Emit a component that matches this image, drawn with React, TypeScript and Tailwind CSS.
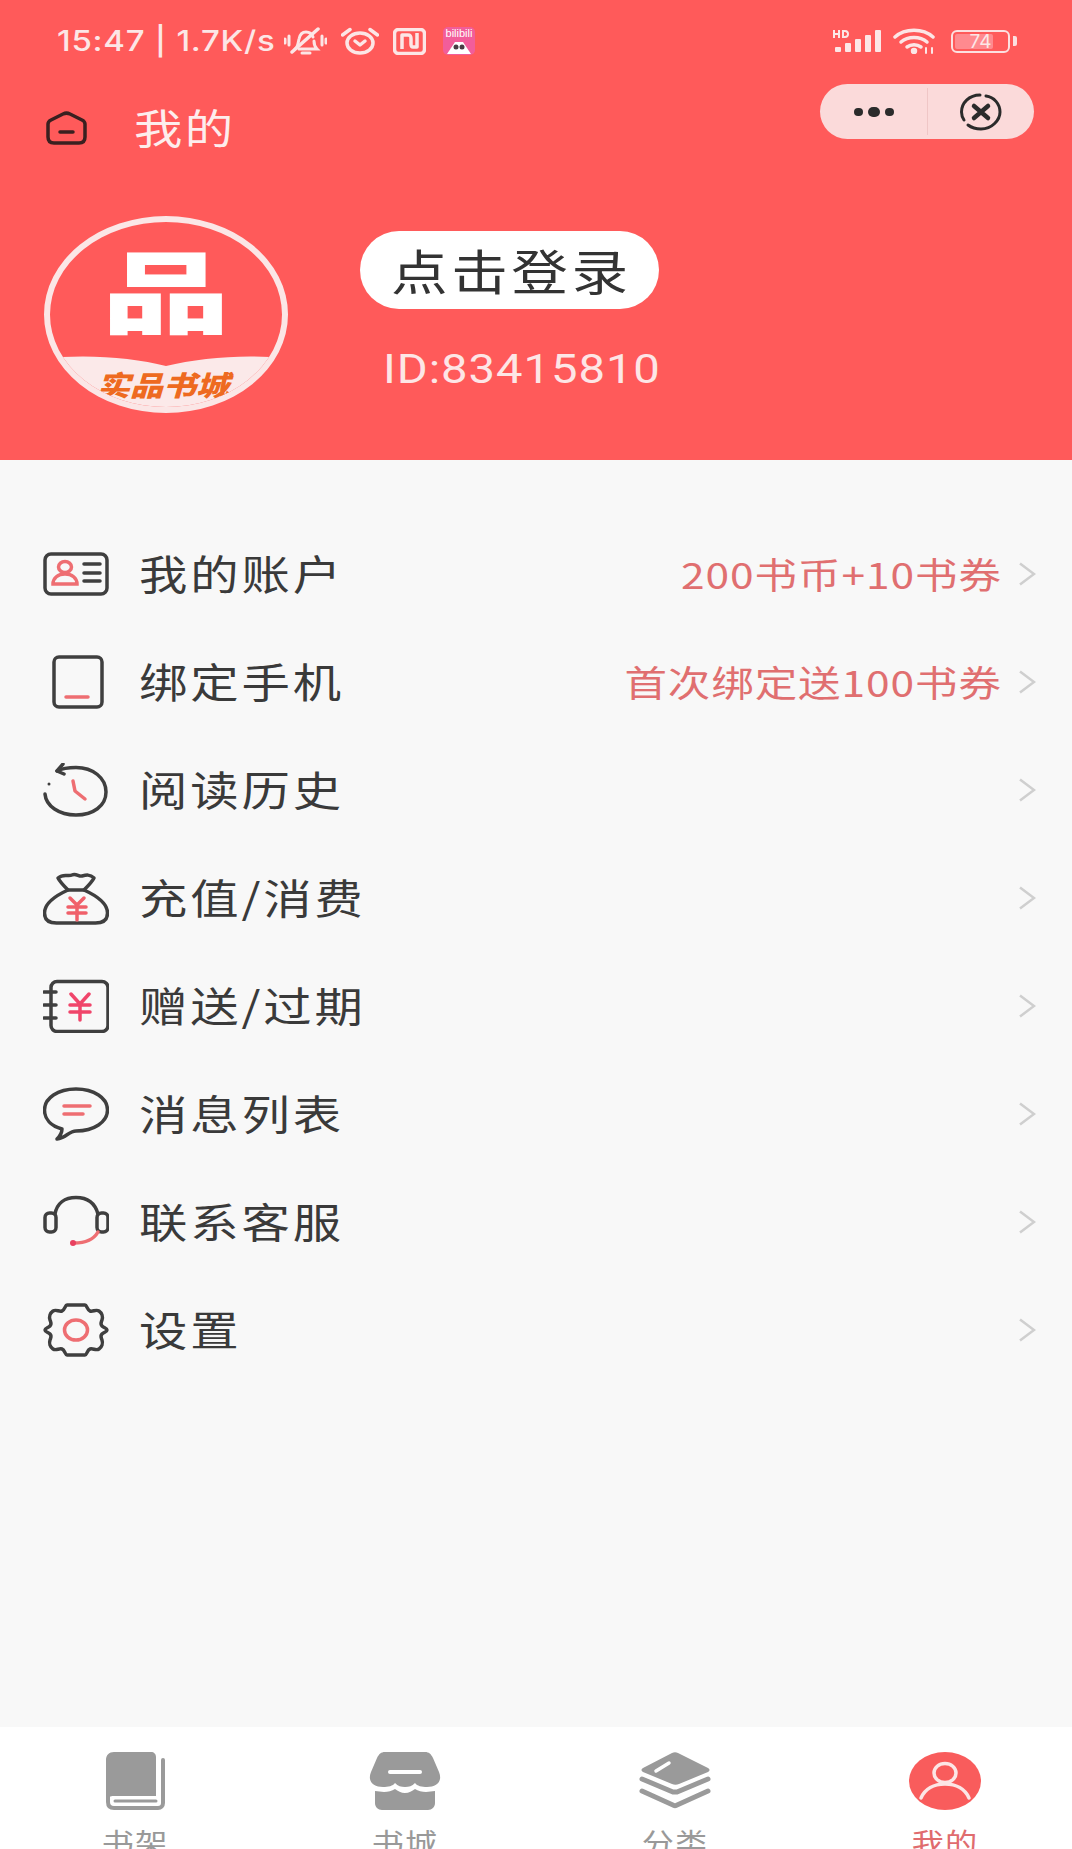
import type { ReactNode } from 'react';

const FONT = "font-['Noto_Sans_CJK_SC','Noto_Sans',sans-serif]";
const INK = '#3f3f3f';
const RED = '#EE6E72';

// ---- list icons, all drawn in a 66x54 box ----
const IconCard = () => (
  <svg width="66" height="54" viewBox="0 0 66 54" fill="none" strokeWidth="3.500" strokeLinecap="round">
    <rect x="2" y="7" width="62" height="40" rx="6" stroke={INK} />
    <ellipse cx="22" cy="20" rx="6.500" ry="5.500" stroke={RED} />
    <path d="M10 37c0-6 5-10 12-10s12 4 12 10z" stroke={RED} />
    <path d="M41 17h16M41 26h16M41 34h16" stroke={INK} />
  </svg>
);

const IconPhone = () => (
  <svg width="66" height="54" viewBox="0 0 66 54" fill="none" strokeWidth="3.500" strokeLinecap="round">
    <rect x="11" y="2" width="48" height="50" rx="5" stroke={INK} />
    <path d="M23 42h22" stroke={RED} />
  </svg>
);

const IconHistory = () => (
  <svg width="66" height="54" viewBox="0 0 66 54" fill="none" strokeWidth="3.500" strokeLinecap="round" strokeLinejoin="round">
    <path d="M14 8C19 5.500 25 4.500 33 4.500 50 4.500 63 15 63 29S50 52 33 52C16 52 3 43 2 31" stroke={INK} />
    <path d="M20 1l-6 7 7 3" stroke={INK} />
    <circle cx="6" cy="21" r="1.500" fill={INK} />
    <path d="M30 18l2 10 10 8" stroke={RED} />
  </svg>
);

const IconBag = () => (
  <svg width="66" height="54" viewBox="0 0 66 54" fill="none" strokeWidth="3.500" strokeLinecap="round" strokeLinejoin="round">
    <path d="M25 19C14 24 1.500 32 1.500 42c0 7 5 10 12 10h39c7 0 12-3 12-10 0-10-12.500-18-23.500-23" stroke={INK} />
    <path d="M25 19h16c4-4 8-8 10-12-4-4-8-3-12-2-3 1-6-3-10-1-4 2-8-2-14 3 2 4 6 8 10 12z" stroke={INK} />
    <path d="M27 27l7 7 7-7M25 36h18M25 42h18M34 34v15" stroke="#F0606A" />
  </svg>
);

const IconVoucher = () => (
  <svg width="66" height="54" viewBox="0 0 66 54" fill="none" strokeWidth="3.500" strokeLinecap="round" strokeLinejoin="round">
    <rect x="8" y="2.500" width="57" height="50" rx="6" stroke={INK} />
    <path d="M1 13h12M1 26h12M1 39h12" stroke={INK} />
    <path d="M28 15l9 10 9-10M27 26h20M27 33h20M37 25v16" stroke="#F0456A" />
  </svg>
);

const IconMessage = () => (
  <svg width="66" height="54" viewBox="0 0 66 54" fill="none" strokeWidth="3.500" strokeLinecap="round" strokeLinejoin="round">
    <path d="M19 42C8 39 1.500 32 1.500 23 1.500 11 15 2 33 2s31.500 9 31.500 21S51 44 33 44c-7 0-10 7-19 8 3-3 5-6 5-10z" stroke={INK} />
    <path d="M21 19h26M21 27h19" stroke={RED} />
  </svg>
);

const IconHeadset = () => (
  <svg width="66" height="54" viewBox="0 0 66 54" fill="none" strokeWidth="3.500" strokeLinecap="round">
    <path d="M12 19C14 8 22 2.500 33 2.500S52 8 55 19" stroke={INK} />
    <rect x="2" y="18" width="11" height="19" rx="4.500" stroke={INK} />
    <rect x="54" y="18" width="11" height="19" rx="4.500" stroke={INK} />
    <path d="M55 37C51 44 42 48 31 48" stroke={RED} />
    <circle cx="30" cy="48" r="3" fill="#E8405F" />
  </svg>
);

const IconGear = () => (
  <svg width="66" height="54" viewBox="0 0 66 54" fill="none" strokeWidth="3.500" strokeLinecap="round" strokeLinejoin="round">
    <path
      d="M24 2h18c2 0 2 5 5 6 3 1 6-2 9 0 3 2 4 6 3 9-1 3-2 4 0 6 2 2 5 2 5 4s-3 2-5 4c-2 2-1 3 0 6 1 3 0 7-3 9-3 2-6-1-9 0-3 1-3 6-5 6H24c-2 0-2-5-5-6-3-1-6 2-9 0-3-2-4-6-3-9 1-3 2-4 0-6-2-2-5-2-5-4s3-2 5-4c2-2 1-3 0-6-1-3 0-7 3-9 3-2 6 1 9 0 3-1 3-6 5-6z"
      stroke={INK}
    />
    <ellipse cx="33" cy="27" rx="11.500" ry="10" stroke={RED} />
  </svg>
);

// ---- status bar glyphs ----
const W = '#FCE6E6';

const MutedBell = () => (
  <svg width="43" height="28" viewBox="0 0 43 28" fill="none" stroke={W} strokeWidth="3" strokeLinecap="round">
    <path d="M1 12v4M5 9v9M38 9v9M42 12v4" />
    <path d="M11 22c3-2 3-6 4-10 1-5 4-7 7-7 4 0 6 2 7 5M30 14c0 3 1 6 3 8H15" />
    <path d="M18 26h8" />
    <path d="M8 25L34 2" strokeWidth="3.500" />
  </svg>
);

const Alarm = () => (
  <svg width="38" height="28" viewBox="0 0 38 28" fill="none" stroke={W} strokeWidth="3.500" strokeLinecap="round" strokeLinejoin="round">
    <ellipse cx="19" cy="16" rx="13" ry="10" />
    <path d="M1.500 8L9 2.500M36.500 8L29 2.500" />
    <path d="M14 14l5 4 5-4" />
  </svg>
);

const Nfc = () => (
  <svg width="33" height="27" viewBox="0 0 33 27" fill="none" stroke={W} strokeWidth="3.500" strokeLinejoin="round">
    <rect x="1.500" y="1.500" width="30" height="24" rx="4" />
    <path d="M9 21V7h6c3 0 3 2 3 4v5c0 2 0 3 2 3h4V5" />
  </svg>
);

const Bilibili = () => (
  <div className="w-[32px] h-[28px] rounded-[5px] bg-[#F25D9A] flex flex-col items-center overflow-hidden">
    <span className="text-[11px] leading-[13px] text-white font-['Liberation_Sans',sans-serif]">bilibili</span>
    <svg width="24" height="14" viewBox="0 0 24 14" fill="white">
      <path d="M0 14L8 2h8l8 12z" />
      <circle cx="9" cy="7" r="2.500" fill="#4a3b44" />
      <circle cx="15" cy="7" r="2.500" fill="#4a3b44" />
    </svg>
  </div>
);

const Signal = () => (
  <svg width="48" height="24" viewBox="0 0 48 24" fill={W}>
    <path d="M0 1h2v3h3V1h2v8H5V6H2v3H0zM9 1h3c3 0 4 2 4 4s-1 4-4 4H9zm2 2v4h1c1 0 2-1 2-2s-1-2-2-2z" />
    <rect x="2" y="18" width="6" height="5" rx="1" />
    <rect x="12" y="14" width="6" height="9" rx="1" />
    <rect x="22" y="10" width="6" height="13" rx="1" />
    <rect x="32" y="6" width="6" height="17" rx="1" />
    <rect x="42" y="1" width="6" height="22" rx="1" />
  </svg>
);

const Wifi = () => (
  <svg width="44" height="26" viewBox="0 0 44 26" fill="none" stroke={W} strokeWidth="3.500" strokeLinecap="round">
    <path d="M2 9C12 0 30 0 40 9" />
    <path d="M8 14C15 8 27 8 34 14" />
    <path d="M14 19c4-3 10-3 14 0" />
    <circle cx="21" cy="23" r="1.500" fill={W} />
    <path d="M33 20v5M39 20v5" strokeWidth="2" />
  </svg>
);

const Battery = () => (
  <div className="flex items-center gap-[3px]">
    <div className="w-[59px] h-[23px] rounded-[6px] border-[2.5px] border-[#FCE0E0] relative flex items-center justify-center">
      <div className="absolute left-[2px] top-[2px] bottom-[2px] w-[38px] rounded-[2px] bg-[#FF8A8F]" />
      <span className="relative text-[19px] leading-none text-[#FCE6E6] font-['Inter',sans-serif]">74</span>
    </div>
    <div className="w-[4px] h-[10px] rounded-r-[2px] bg-[#FCE0E0]" />
  </div>
);

const HomeIcon = () => (
  <svg width="41" height="34" viewBox="0 0 41 34" fill="none" stroke="#3a2020" strokeWidth="3.500" strokeLinejoin="round" strokeLinecap="round">
    <path d="M2 13C2 11 3 10 5 9L17 3c2-1 5-1 7 0l12 6c2 1 3 2 3 4v13c0 4-2 6-6 6H8c-4 0-6-2-6-6z" />
    <path d="M14 21h13" />
  </svg>
);

const CloseIcon = () => (
  <svg width="42" height="38" viewBox="0 0 42 38" fill="none" stroke="#2b2b2b" strokeLinecap="round">
    <path d="M26 3c8 1 14 8 14 16s-8 17-19 17c-5 0-9-1-13-4" strokeWidth="3" />
    <path d="M4 27C2 24 1.500 22 1.500 19 1.500 10 9 2 20 2" strokeWidth="3" />
    <path d="M14 13l14 12M28 13L14 25" strokeWidth="4.500" />
  </svg>
);

// ---- tab bar icons, 72x58 ----
const TabBook = () => (
  <svg width="72" height="58" viewBox="0 0 72 58" fill="none">
    <path d="M7 8C7 3 10 0 15 0H52C55 0 57 2 57 5V44H15C10 44 7 46 7 50Z" fill="#9a9a9a" />
    <path d="M9 44V50C9 54 11 56 15 56H59C62 56 64 54 64 51V8" stroke="#9a9a9a" strokeWidth="4" strokeLinecap="round" />
    <path d="M16 49H57" stroke="#9a9a9a" strokeWidth="3" strokeLinecap="round" />
  </svg>
);

const TabStore = () => (
  <svg width="72" height="58" viewBox="0 0 72 58" fill="#9a9a9a">
    <path d="M16 0H56C60 0 62 2 64 6L70 20C74 30 67 35 58 35 53 35 48 34 46 31 43 34 40 35 36 35 32 35 29 34 26 31 24 34 19 35 14 35 5 35-2 30 2 20L8 6C10 2 12 0 16 0Z" />
    <path d="M6 39c3 0 6 1 9 1 4 0 8-1 11-3 3 2 6 4 10 4s7-2 10-4c3 2 7 3 11 3 3 0 6-1 9-1v12c0 4-3 7-7 7H13c-4 0-7-3-7-7z" />
    <rect x="19" y="18" width="34" height="4" rx="2" fill="#fff" />
  </svg>
);

const TabLayers = () => (
  <svg width="72" height="58" viewBox="0 0 72 58" fill="none">
    <path d="M33 1c2-1 4-1 6 0l30 15c2 1 2 3 0 4L40 32c-2 1-5 1-7 0L4 20c-2-1-2-3 0-4z" fill="#9a9a9a" />
    <path d="M17 19L30 11" stroke="#fff" strokeWidth="3.500" strokeLinecap="round" />
    <path d="M3 27l31 13c1 0 3 0 4 0l31-13M3 39l31 14c1 1 3 1 4 0l31-14" stroke="#9a9a9a" strokeWidth="5" strokeLinecap="round" />
  </svg>
);

const TabProfile = () => (
  <svg width="72" height="58" viewBox="0 0 72 58" fill="none">
    <ellipse cx="36" cy="29" rx="36" ry="29" fill="#F95C5C" />
    <ellipse cx="36" cy="21" rx="11" ry="9.500" stroke="#FCE6E6" strokeWidth="3.500" />
    <path d="M12 46c4-9 13-14 24-14s20 5 24 14" stroke="#FCE6E6" strokeWidth="3.500" strokeLinecap="round" />
  </svg>
);

const Chevron = () => (
  <svg width="17" height="24" viewBox="0 0 17 24" fill="none" stroke="#cfcfcf" strokeWidth="2.500" className="shrink-0">
    <path d="M1 1.500L15 12 1 22.500" />
  </svg>
);

interface MenuItem {
  icon: ReactNode;
  label: string;
  note?: string;
}

const menu: MenuItem[] = [
  { icon: <IconCard />, label: '我的账户', note: '200书币+10书券' },
  { icon: <IconPhone />, label: '绑定手机', note: '首次绑定送100书券' },
  { icon: <IconHistory />, label: '阅读历史' },
  { icon: <IconBag />, label: '充值/消费' },
  { icon: <IconVoucher />, label: '赠送/过期' },
  { icon: <IconMessage />, label: '消息列表' },
  { icon: <IconHeadset />, label: '联系客服' },
  { icon: <IconGear />, label: '设置' },
];

const tabs = [
  { icon: <TabBook />, label: '书架' },
  { icon: <TabStore />, label: '书城' },
  { icon: <TabLayers />, label: '分类' },
  { icon: <TabProfile />, label: '我的', active: true },
];

function Avatar() {
  return (
    <div className="relative w-[244px] h-[197px] rounded-[50%] border-[6px] border-[#FBE6E6] overflow-hidden shrink-0">
      <div className="flex justify-center pt-[15px]">
        <span className="text-[90px] leading-[100px] font-black text-white scale-x-[1.42]">品</span>
      </div>
      <svg className="absolute left-0 bottom-0" width="232" height="51" viewBox="0 0 232 51" preserveAspectRatio="none">
        <path d="M0 2C40-2 85 2 116 10 149 2 194-2 232 2V51H0z" fill="#FBE9E9" />
      </svg>
      <span className="absolute left-[47px] bottom-[8px] text-[28px] leading-[30px] font-black italic text-[#EE6A20] whitespace-nowrap origin-left scale-x-[1.18]">
        实品书城
      </span>
    </div>
  );
}

export default function App() {
  return (
    <div className={`${FONT} w-[1072px] h-[1849px] overflow-hidden flex flex-col bg-[#F8F8F8]`}>
      <header className="h-[460px] shrink-0 bg-[#FF5A5A]">
        {/* status bar */}
        <div className="h-[82px] pl-[57px] pr-[55px] flex items-center justify-between">
          <div className="flex items-center">
            <span className="w-[227px] text-[28px] font-medium leading-none tracking-[0.6px] text-[#FCE6E6] whitespace-nowrap origin-left scale-x-[1.18] font-['Inter',sans-serif]">
              15:47 | 1.7K/s
            </span>
            <div className="flex items-center gap-[14px]">
              <MutedBell />
              <Alarm />
              <Nfc />
              <div className="ml-[3px]">
                <Bilibili />
              </div>
            </div>
          </div>
          <div className="flex items-center gap-[12px]">
            <Signal />
            <Wifi />
            <div className="ml-[2px]">
              <Battery />
            </div>
          </div>
        </div>

        {/* title row with the mini program capsule */}
        <div className="h-[92px] pl-[46px] pr-[38px] flex items-center justify-between">
          <div className="flex items-center gap-[47px]">
            <HomeIcon />
            <span className="-mt-[3px] text-[41px] leading-none tracking-[2px] text-[#FDEDED] whitespace-nowrap origin-left scale-x-[1.18]">
              我的
            </span>
          </div>
          <div className="self-start mt-[2px] w-[214px] h-[55px] rounded-full bg-[#FBDADA] flex items-center">
            <div className="w-[107px] flex items-center justify-center gap-[5px]">
              <span className="w-[9px] h-[8px] rounded-full bg-[#2b2b2b]" />
              <span className="w-[12px] h-[10px] rounded-full bg-[#2b2b2b]" />
              <span className="w-[9px] h-[8px] rounded-full bg-[#2b2b2b]" />
            </div>
            <div className="w-px h-[47px] bg-[#EFC6C6]" />
            <div className="flex-1 flex items-center justify-center">
              <CloseIcon />
            </div>
          </div>
        </div>

        {/* user block */}
        <div className="pt-[42px] pl-[44px] flex">
          <Avatar />
          <div className="ml-[72px] pt-[15px]">
            <div className="w-[299px] h-[78px] rounded-full bg-white flex items-center pl-[31px]">
              <span className="-mt-[3px] text-[48px] leading-none tracking-[3px] text-[#333] whitespace-nowrap origin-left scale-x-[1.18]">
                点击登录
              </span>
            </div>
            <p className="mt-[39px] ml-[23px] text-[40px] leading-[44px] tracking-[0.8px] text-[#FDE6E6] whitespace-nowrap origin-left scale-x-[1.18] font-['Roboto',sans-serif]">
              ID:83415810
            </p>
          </div>
        </div>
      </header>

      <main className="flex-1 pt-[60px] pl-[43px] pr-[36px]">
        {menu.map((item) => (
          <div key={item.label} className="h-[108px] flex items-center">
            <div className="w-[96px] shrink-0">{item.icon}</div>
            <span className="-mt-[3px] text-[41px] leading-none tracking-[2.4px] text-[#3a3a3a] whitespace-nowrap origin-left scale-x-[1.18]">
              {item.label}
            </span>
            <div className="ml-auto flex items-center gap-[17px]">
              {item.note && (
                <span className="-mt-[2px] text-[36px] leading-none tracking-[0.8px] text-[#E06F70] whitespace-nowrap origin-right scale-x-[1.18]">
                  {item.note}
                </span>
              )}
              <Chevron />
            </div>
          </div>
        ))}
      </main>

      <nav className="h-[122px] shrink-0 bg-white overflow-hidden grid grid-cols-[repeat(4,270px)] pt-[25px]">
        {tabs.map((tab) => (
          <div key={tab.label} className="flex flex-col items-center gap-[14px]">
            {tab.icon}
            <span
              className={`text-[28px] leading-[36px] tracking-[1px] scale-x-[1.15] whitespace-nowrap ${
                tab.active ? 'text-[#E06C6E]' : 'text-[#999]'
              }`}
            >
              {tab.label}
            </span>
          </div>
        ))}
      </nav>
    </div>
  );
}
